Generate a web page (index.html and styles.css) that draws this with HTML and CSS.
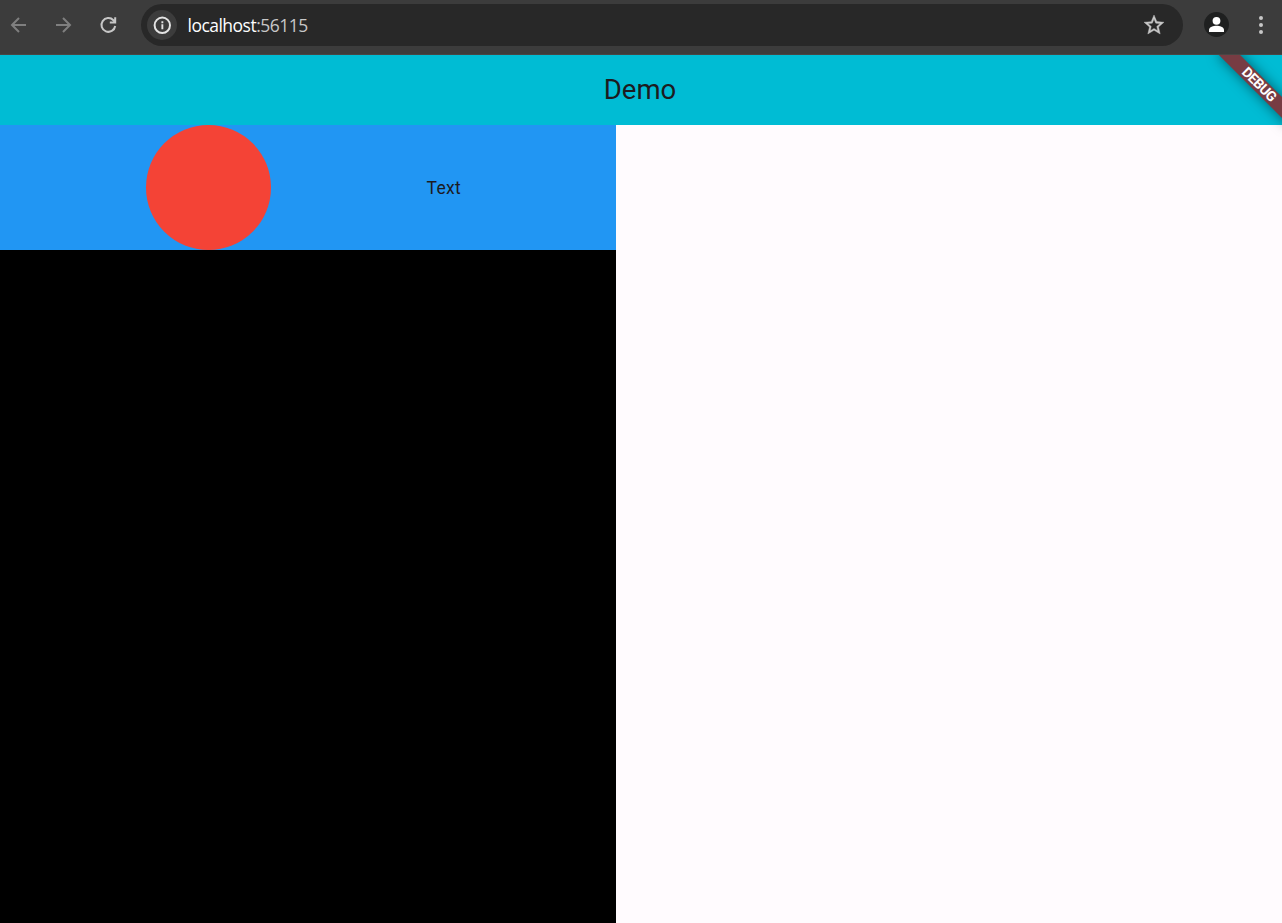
FILE: index.html
```html
<!DOCTYPE html>
<html lang="en">
<head>
<meta charset="utf-8">
<title>Demo</title>
<link rel="stylesheet" href="styles.css">
</head>
<body>
<header class="toolbar">
  <nav class="nav">
    <svg class="nav-icon dim" viewBox="0 0 24 24"><path d="M19 12H5M12 5l-7 7 7 7"/></svg>
    <svg class="nav-icon dim" viewBox="0 0 24 24"><path d="M4 12h14M11 5l7 7-7 7"/></svg>
    <svg class="nav-icon" viewBox="0 0 24 24"><path d="M18.200 13a6.900 6.900 0 1 1-1.800-5.800L18.200 9.200M18.200 4.200V9.500H12.800"/></svg>
  </nav>
  <div class="omnibox">
    <span class="info"><svg width="20" height="20" viewBox="0 0 20 20"><circle cx="10.300" cy="10.300" r="7.700" fill="none" stroke="#e3e3e3" stroke-width="2"/><path d="M9.400 9.300h1.900v5H9.400zM9.400 6.300h1.900v1.900H9.400z" fill="#e3e3e3"/></svg></span>
    <span class="url">localhost<span class="port">:56115</span></span>
    <svg class="star" viewBox="0 0 24 24"><path d="M22 9.24l-7.19-.62L12 2 9.19 8.63 2 9.24l5.46 4.73L5.82 21 12 17.27 18.18 21l-1.63-7.03L22 9.24zM12 15.4l-3.76 2.27 1-4.28-3.32-2.88 4.38-.38L12 6.1l1.71 4.04 4.38.38-3.32 2.88 1 4.28L12 15.4z"/></svg>
  </div>
  <span class="avatar"><svg width="25" height="25" viewBox="0 0 25 25"><circle cx="12.5" cy="8.800" r="3.900"/><path d="M5 20v-2.200c0-2.700 4.500-4.100 7.500-4.100s7.500 1.400 7.500 4.100V20z"/></svg></span>
  <svg class="menu" width="6" height="20" viewBox="0 0 6 20"><circle cx="3" cy="3" r="2"/><circle cx="3" cy="10" r="2"/><circle cx="3" cy="17" r="2"/></svg>
</header>
<main class="app">
  <div class="app-bar"><h1 class="title">Demo</h1></div>
  <section class="panel">
    <div class="row">
      <div class="circle"></div>
      <span class="label">Text</span>
    </div>
  </section>
  <div class="banner">DEBUG</div>
</main>
</body>
</html>
```
FILE: styles.css
```css
* { box-sizing: border-box; }
body {
  margin: 0;
  height: 100vh;
  display: flex;
  flex-direction: column;
  overflow: hidden;
  font-family: Roboto, sans-serif;
  color: #1c1b1f;
}
.toolbar {
  display: flex;
  align-items: center;
  height: 55px;
  flex: none;
  padding: 0 18px 5px 7px;
  background: #3c3c3c;
  border-bottom: 1px solid #484644;
}
.nav { display: flex; gap: 21px; width: 134px; flex: none; }
.nav-icon { width: 24px; height: 24px; fill: none; stroke: #c7c7c7; stroke-width: 2; }
.nav-icon.dim { stroke: #7f7f7f; }
.omnibox {
  display: flex;
  align-items: center;
  width: 1042px;
  height: 42px;
  padding: 0 17.5px 0 6px;
  border-radius: 21px;
  background: #282828;
  flex: none;
}
.info {
  display: flex;
  align-items: center;
  justify-content: center;
  width: 30px;
  height: 30px;
  border-radius: 50%;
  background: #3c3c3c;
}
.url {
  margin-left: 10.5px;
  padding-top: 1px;
  font: 17.5px/24px "Open Sans", sans-serif;
  letter-spacing: -0.52px;
  color: #fff;
}
.port { color: #c7c7c7; }
.star {
  width: 24px;
  height: 24px;
  margin: 1px 0 0 auto;
  fill: #c7c7c7;
  stroke: #c7c7c7;
  stroke-width: 0.4;
}
.avatar {
  width: 25px;
  height: 25px;
  margin-left: 21px;
  border-radius: 50%;
  background: #1f2020;
  fill: #fff;
}
.avatar svg { display: block; }
.menu { margin-left: auto; fill: #c7c7c7; }
.app {
  position: relative;
  flex: 1;
  overflow: hidden;
  background: #fffbfe;
}
.app-bar {
  display: flex;
  align-items: center;
  justify-content: center;
  height: 70px;
  padding: 0 2px 2px 0;
  background: #00bcd4;
}
.title { margin: 0; font-size: 27.5px; font-weight: 400; line-height: 35px; }
.panel { width: 616px; height: 798px; background: #000; }
.row {
  display: flex;
  align-items: center;
  gap: 155.5px;
  height: 125px;
  padding-left: 146px;
  background: #2196f3;
}
.circle { width: 125px; height: 125px; border-radius: 50%; background: #f44336; }
.label { padding-top: 2px; font-size: 17.5px; line-height: 25px; letter-spacing: 0.31px; }
.banner {
  position: absolute;
  top: 22px;
  right: -27px;
  width: 100px;
  height: 15px;
  transform: rotate(45deg);
  background: #773c43;
  box-shadow: 0 0 13px rgba(0, 0, 0, 0.5);
  color: #fff;
  font-size: 14px;
  font-weight: 700;
  line-height: 15px;
  letter-spacing: -0.6px;
  text-align: center;
}
```
